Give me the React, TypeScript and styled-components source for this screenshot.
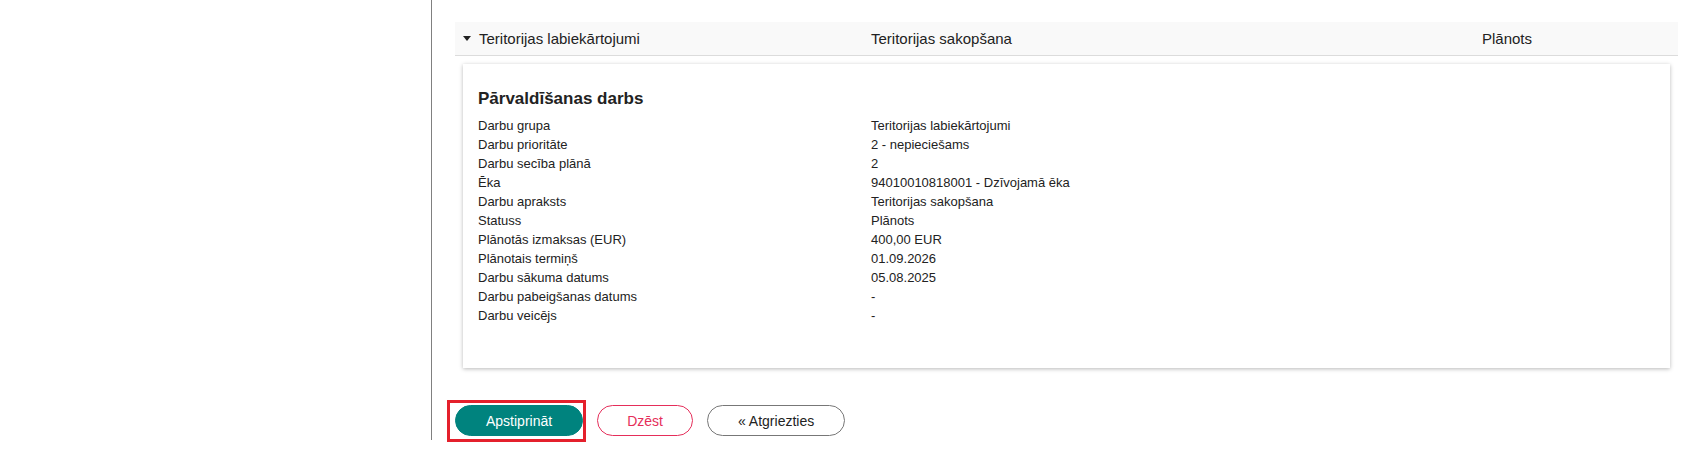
import { Fragment } from "react";
import styled, { createGlobalStyle } from "styled-components";

const GlobalStyle = createGlobalStyle`
  html, body {
    margin: 0;
    padding: 0;
    background: #fff;
  }
  body {
    font-family: "Liberation Sans", Arial, sans-serif;
    color: #222;
  }
`;

const Page = styled.div`
  display: flex;
  width: 1699px;
  height: 459px;
  align-items: flex-start;
`;

const Sidebar = styled.aside`
  width: 431px;
  height: 440px;
  border-right: 1px solid #808080;
  flex-shrink: 0;
`;

const Main = styled.main`
  flex: 1;
  padding: 22px 21px 0 23px;
`;

const HeaderRow = styled.div`
  display: grid;
  grid-template-columns: 408px 611px 1fr;
  height: 33px;
  background: #f9f9f9;
  border-bottom: 1px solid #dcdcdc;
`;

const HeaderCell = styled.div`
  display: flex;
  align-items: center;
  gap: 8px;
  padding: 0 8px;
  font-size: 15px;
  color: #222;
  white-space: nowrap;
`;

const Caret = styled.span`
  width: 0;
  height: 0;
  border-left: 4px solid transparent;
  border-right: 4px solid transparent;
  border-top: 5px solid #222;
  margin-top: -1px;
`;

const Card = styled.section`
  margin: 8px 8px 0;
  height: 304px;
  box-sizing: border-box;
  padding: 15px 15px 43px;
  background: #fff;
  box-shadow: 0 1px 4px rgba(0, 0, 0, 0.28);
`;

const CardTitle = styled.h4`
  margin: 10px 0 8px;
  font-size: 17px;
  line-height: 19px;
  font-weight: bold;
  color: #222;
`;

const DetailList = styled.dl`
  display: grid;
  grid-template-columns: 393px 1fr;
  margin: 0;
  font-size: 13px;
  line-height: 19px;
  color: #222;
`;

const Term = styled.dt`
  margin: 0;
  font-weight: normal;
`;

const Value = styled.dd`
  margin: 0;
`;

const Actions = styled.div`
  display: flex;
  gap: 14px;
  margin-top: 37px;
`;

const Highlight = styled.span`
  position: relative;
  display: inline-flex;
  &::after {
    content: "";
    position: absolute;
    left: -8px;
    top: -5px;
    right: -3px;
    bottom: -6px;
    border: 3px solid #e4202c;
    pointer-events: none;
  }
`;

type Variant = "primary" | "danger" | "default";

const accent: Record<Variant, string> = {
  primary: "#00837e",
  danger: "#e52e5a",
  default: "#777",
};

const Button = styled.button<{ $variant: Variant }>`
  height: 31px;
  padding: 0 ${(p) => (p.$variant === "danger" ? "29px" : "30px")};
  border-radius: 16px;
  font-family: "Liberation Sans", Arial, sans-serif;
  font-size: 14px;
  cursor: pointer;
  border: 1px solid ${(p) => accent[p.$variant]};
  background: ${(p) => (p.$variant === "primary" ? accent.primary : "#fff")};
  color: ${(p) =>
    p.$variant === "primary"
      ? "#fff"
      : p.$variant === "danger"
      ? accent.danger
      : "#222"};
`;

const details: [string, string][] = [
  ["Darbu grupa", "Teritorijas labiekārtojumi"],
  ["Darbu prioritāte", "2 - nepieciešams"],
  ["Darbu secība plānā", "2"],
  ["Ēka", "94010010818001 - Dzīvojamā ēka"],
  ["Darbu apraksts", "Teritorijas sakopšana"],
  ["Statuss", "Plānots"],
  ["Plānotās izmaksas (EUR)", "400,00 EUR"],
  ["Plānotais termiņš", "01.09.2026"],
  ["Darbu sākuma datums", "05.08.2025"],
  ["Darbu pabeigšanas datums", "-"],
  ["Darbu veicējs", "-"],
];

export default function App() {
  return (
    <>
      <GlobalStyle />
      <Page>
        <Sidebar />
        <Main>
          <HeaderRow>
            <HeaderCell>
              <Caret />
              Teritorijas labiekārtojumi
            </HeaderCell>
            <HeaderCell>Teritorijas sakopšana</HeaderCell>
            <HeaderCell>Plānots</HeaderCell>
          </HeaderRow>
          <Card>
            <CardTitle>Pārvaldīšanas darbs</CardTitle>
            <DetailList>
              {details.map(([label, value]) => (
                <Fragment key={label}>
                  <Term>{label}</Term>
                  <Value>{value}</Value>
                </Fragment>
              ))}
            </DetailList>
          </Card>
          <Actions>
            <Highlight>
              <Button $variant="primary">Apstiprināt</Button>
            </Highlight>
            <Button $variant="danger">Dzēst</Button>
            <Button $variant="default">« Atgriezties</Button>
          </Actions>
        </Main>
      </Page>
    </>
  );
}
